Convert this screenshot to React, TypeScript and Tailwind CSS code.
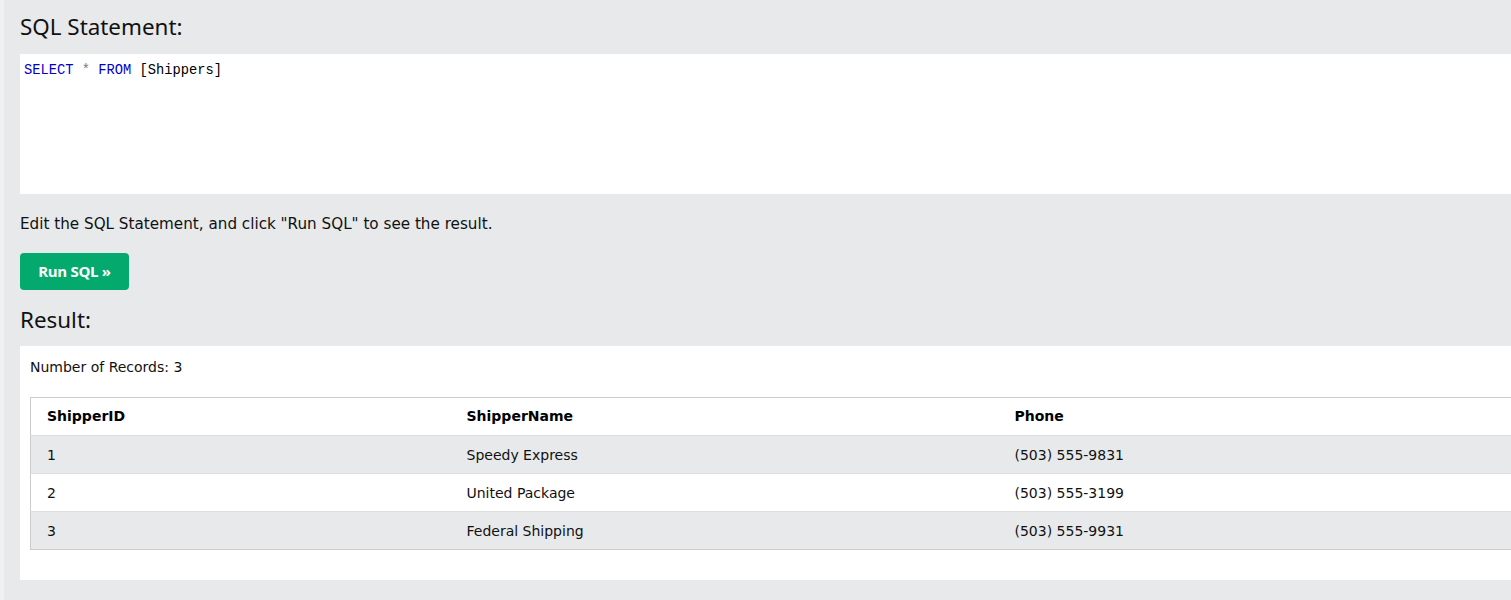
const rows = [
  { id: "1", name: "Speedy Express", phone: "(503) 555-9831" },
  { id: "2", name: "United Package", phone: "(503) 555-3199" },
  { id: "3", name: "Federal Shipping", phone: "(503) 555-9931" },
];

const App = () => {
  return (
    <div className="w-[1511px] h-[600px] overflow-hidden flex bg-[#f1f1f1]">
      <div className="ml-[4px] flex-1 bg-[#e7e9eb] pl-[16px] font-['DejaVu_Sans',sans-serif] text-black">
        <div className="w-[1540px]">
          <h2 className="font-['Noto_Sans',sans-serif] text-[22.4px] leading-[30px] pt-[12px] pb-[12px] text-[#111]">
            SQL Statement:
          </h2>
          <div className="h-[140px] bg-white px-[4px] pt-[8px] font-['Liberation_Mono',monospace] text-[13.75px] leading-[18px]">
            <span className="text-[#0000cd]">SELECT</span>{" "}
            <span className="text-[#777]">*</span>{" "}
            <span className="text-[#0000cd]">FROM</span>{" "}
            <span className="text-black">[Shippers]</span>
          </div>
          <p className="text-[15.2px] leading-[20px] mt-[20px] text-[#111]">
            Edit the SQL Statement, and click "Run SQL" to see the result.
          </p>
          <button className="mt-[19px] w-[109px] h-[37px] rounded-[4px] bg-[#04aa6d] text-white font-['Open_Sans',sans-serif] font-bold text-[15px] tracking-[-0.3px]">
            Run SQL »
          </button>
          <h2 className="font-['Noto_Sans',sans-serif] text-[22.4px] leading-[30px] pt-[15px] pb-[11px] text-[#111]">
            Result:
          </h2>
          <div className="h-[234px] bg-white pt-[11px] px-[10px]">
            <p className="text-[14px] leading-[20px] text-[#111]">Number of Records: 3</p>
            <table className="mt-[20px] w-[1520px] border border-[#ccc] border-collapse text-[14px] text-[#111]">
              <thead>
                <tr className="h-[38px]">
                  <th className="w-[420px] text-left pl-[16px] font-bold text-black">ShipperID</th>
                  <th className="w-[548px] text-left pl-[16px] font-bold text-black">ShipperName</th>
                  <th className="text-left pl-[16px] font-bold text-black">Phone</th>
                </tr>
              </thead>
              <tbody>
                {rows.map((r, i) => (
                  <tr
                    key={r.id}
                    className={`h-[38px] border-t border-[#ddd] ${i % 2 === 0 ? "bg-[#e7e9eb]" : "bg-white"}`}
                  >
                    <td className="pl-[16px] pt-[2px]">{r.id}</td>
                    <td className="pl-[16px] pt-[2px]">{r.name}</td>
                    <td className="pl-[16px] pt-[2px]">{r.phone}</td>
                  </tr>
                ))}
              </tbody>
            </table>
          </div>
        </div>
      </div>
    </div>
  );
};

export default App;
